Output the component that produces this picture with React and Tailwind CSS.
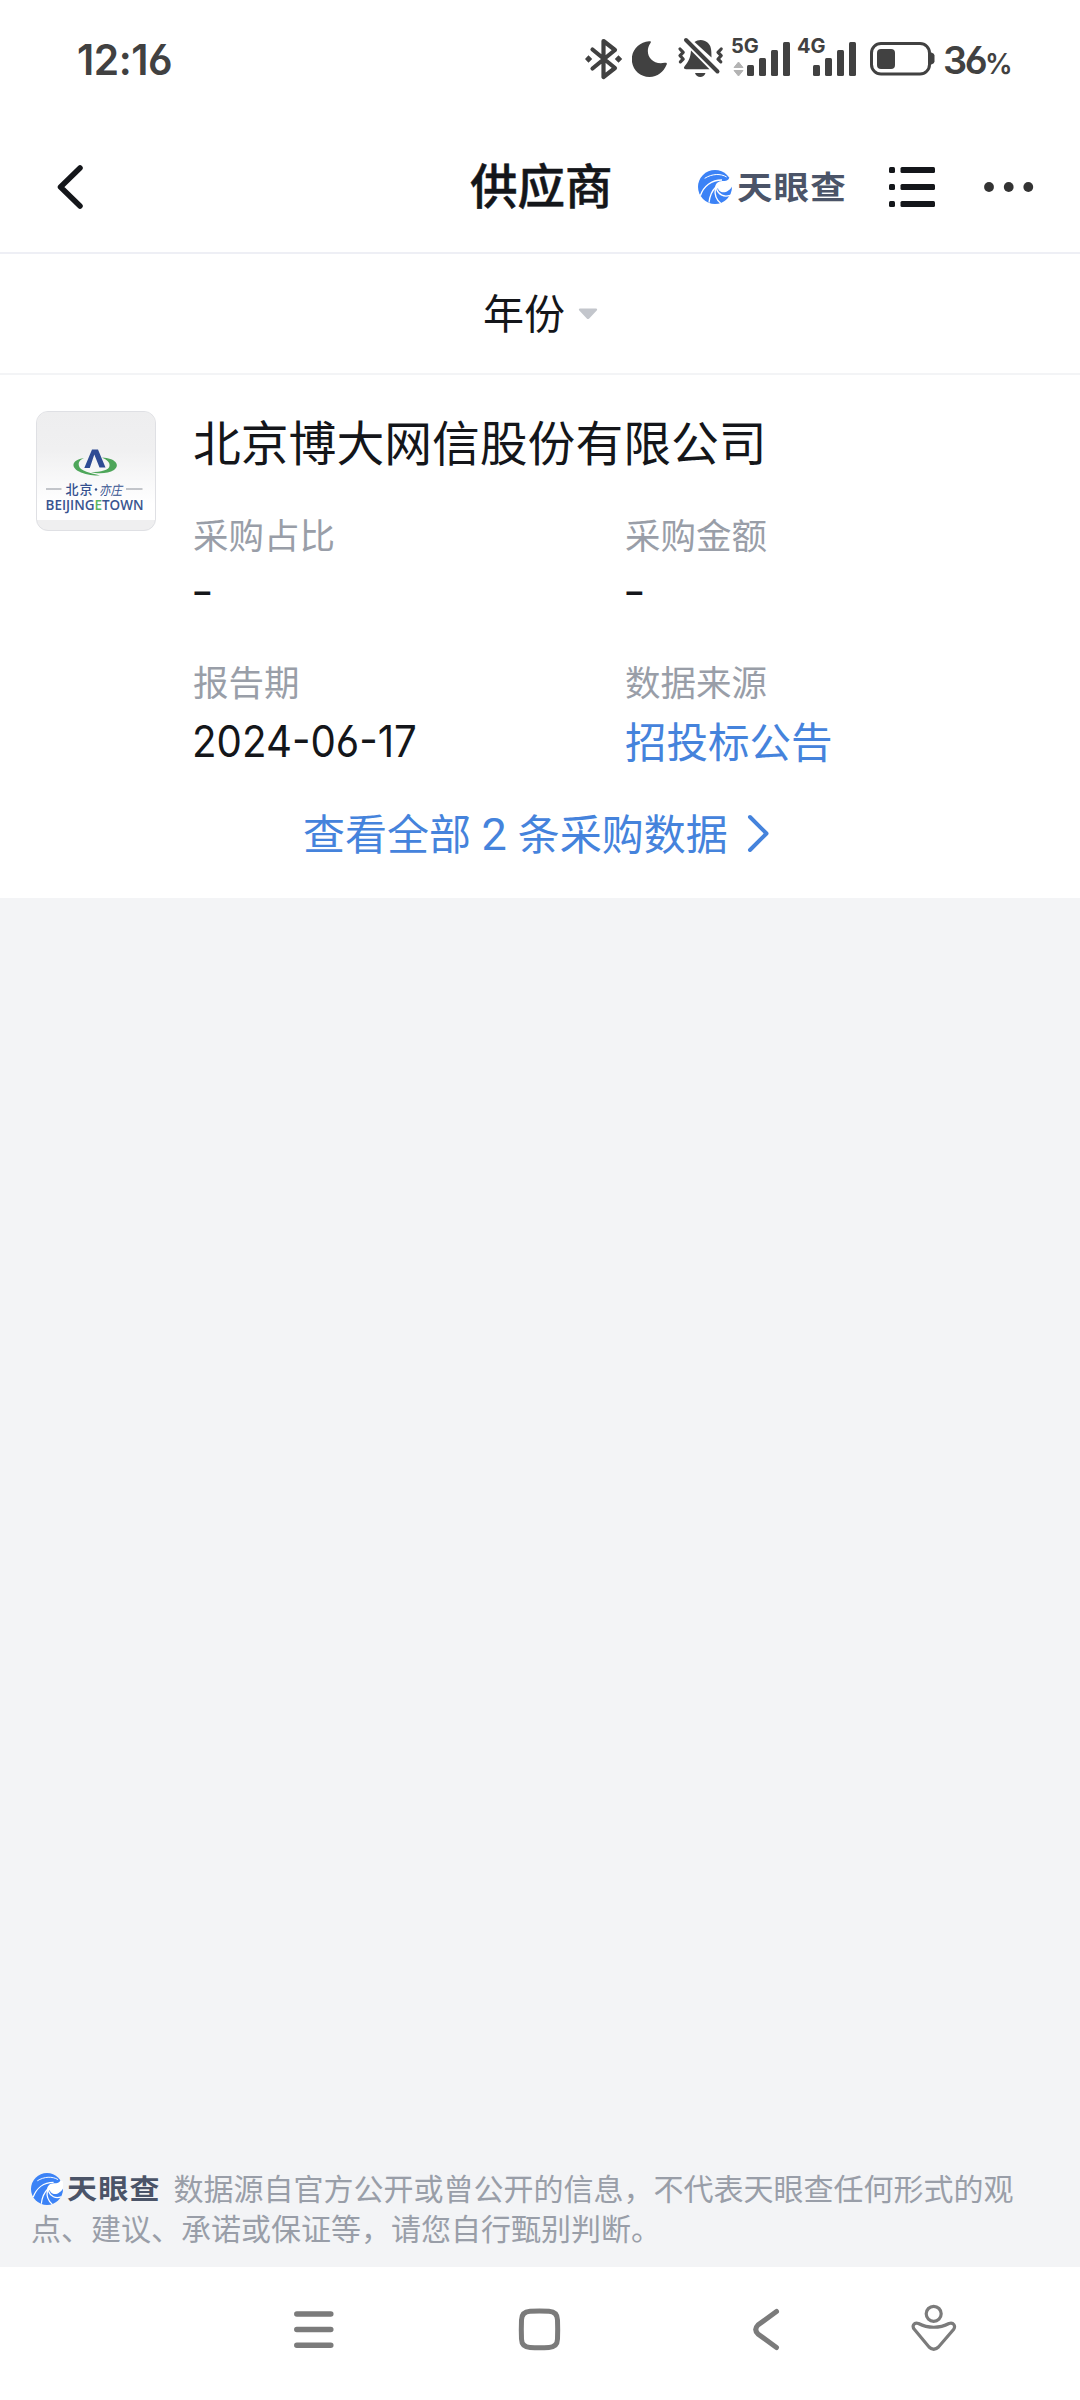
const CJK = "font-['Noto_Sans_CJK_SC',sans-serif]";

function BluetoothIcon() {
  return (
    <svg className="h-[60px] w-[38px]" viewBox="585 29 38 60" fill="none" stroke="#414141">
      <path d="M592.5 49.500 L615 68 L603.500 77 V41 L615 50 L592.500 68.500" strokeWidth="4.200" strokeLinejoin="round" strokeLinecap="round" />
      <path d="M588.500 55.300 l3.700 3.700 l-3.700 3.700 l-3.500 -3.700Z M618.500 55.300 l3.700 3.700 l-3.700 3.700 l-3.700 -3.700Z" fill="#414141" stroke="none" />
    </svg>
  );
}

function MoonIcon() {
  return (
    <svg className="ml-[9px] h-[60px] w-[36px]" viewBox="632 29 36 60">
      <path d="M649 41.200 C651 40.900 651.500 41.600 650.500 43 C643.500 53 651 65.500 664.500 62.800 C666.500 62.400 667.300 63 666.600 64.800 C663.500 72 657.500 77 649.500 77 C639.500 77 631.800 69 631.800 59.300 C631.800 49.500 639.500 42 649 41.200Z" fill="#414141" />
    </svg>
  );
}

function MutedBellIcon() {
  return (
    <svg className="ml-[9px] h-[60px] w-[47px]" viewBox="677 29 47 60" fill="none">
      <path d="M694.500 42 C698 39.200 704 39.200 707.500 42.500 C711 45.600 711.500 49 711.500 57.500Z" fill="#414141" />
      <path d="M691 50.500 L709.500 69.200 H686 C683.500 69.200 683.500 67.500 685 65.800 C689 61 690.500 57 691 50.500Z" fill="#414141" />
      <path d="M695 73 H705.500 C704 78.200 696.500 78.200 695 73Z" fill="#414141" />
      <path d="M686 40 L717.500 71.500" stroke="#414141" strokeWidth="4" strokeLinecap="round" />
      <path d="M680 49 l3.200 3.400 l-3.200 3.300 l3.200 3.300 l-2.800 2.800 M721.200 49 l-3.200 3.400 l3.200 3.300 l-3.200 3.300 l2.800 2.800" stroke="#414141" strokeWidth="3.200" strokeLinejoin="round" strokeLinecap="round" />
    </svg>
  );
}

function Signal({ label, data, className }) {
  return (
    <div className={`relative h-[60px] ${className}`}>
      <span className="absolute left-0 top-[5px] font-['Inter',sans-serif] text-[20px] leading-[24px] font-bold">{label}</span>
      <svg className="h-[60px] w-[60px]" viewBox="731 29 60 60" fill="#414141">
        {data && <path d="M738.500 62 l4.500 5.500 h-9Z M738.500 76 l4.500 -5.500 h-9Z" fill="#b3b3b3" stroke="#b3b3b3" strokeWidth="1" strokeLinejoin="round" />}
        <rect x="747" y="65" width="7" height="11" rx="1.500" />
        <rect x="759" y="58" width="7" height="18" rx="1.500" />
        <rect x="771" y="50" width="7" height="26" rx="1.500" />
        <rect x="783" y="42" width="7" height="34" rx="1.500" />
      </svg>
    </div>
  );
}

function BatteryIcon() {
  return (
    <svg className="ml-[13px] h-[60px] w-[65px]" viewBox="870 29 65 60">
      <rect x="871.500" y="43.500" width="58" height="30.500" rx="9.500" fill="none" stroke="#414141" strokeWidth="3" />
      <rect x="877" y="49" width="18" height="20" rx="4" fill="#414141" />
      <path d="M930.500 52.500 h1 q3 1 3 3 v6 q0 2 -3 3 h-1Z" fill="#414141" />
    </svg>
  );
}

function StatusBar() {
  return (
    <div className="flex h-[122px] items-start pt-[29px] pl-[77px] pr-[67px] font-['Inter',sans-serif] text-[#414141]">
      <span className="origin-left scale-x-[0.97] text-[42px] leading-[62px] font-semibold tracking-[-0.5px]" style={{ fontFeatureSettings: '"cv03"' }}>12:16</span>
      <div className="ml-auto flex">
        <BluetoothIcon />
        <MoonIcon />
        <MutedBellIcon />
        <Signal label="5G" data className="ml-[7px] w-[60px]" />
        <Signal label="4G" className="ml-[6px] w-[60px]" />
        <BatteryIcon />
        <div className="ml-[8px] flex w-[70px] items-baseline leading-[62px]">
          <span className="text-[38px] font-semibold tracking-[-2.500px]" style={{ fontFeatureSettings: '"cv03"' }}>36</span>
          <span className="origin-left scale-x-[0.95] text-[29px] font-semibold">%</span>
        </div>
      </div>
    </div>
  );
}

function SwirlMark({ className }) {
  return (
    <svg className={className} viewBox="0 0 102 102" fill="none">
      <circle cx="51" cy="51" r="51" fill="#3b82f6" />
      <path d="M53 64 C47 48 56 33 73 33 C84 33 91 31 94 23 L108 30 L106 50 L99 50 C95 62 82 70 70 66 C64 64 61 60 60 55 C57 57 54 60 53 64Z" fill="#fff" />
      <path d="M93 38 C96 33 97 29 95 22 L101 38 C102 44 102 48 101 52 C98 56 96 58 92 60 C96 53 97 46 93 38Z" fill="#fff" />
      <path d="M20 25 C42 11 68 10 86 21" stroke="#fff" strokeWidth="3" />
      <path d="M7 77 C17 49 40 30 72 30" stroke="#fff" strokeWidth="4" />
      <path d="M33 98 C35 76 42 62 54 50" stroke="#fff" strokeWidth="4" />
      <path d="M52 56 C49 74 56 90 68 100" stroke="#fff" strokeWidth="4" />
      <path d="M56 58 C62 75 78 82 96 76" stroke="#fff" strokeWidth="4" />
    </svg>
  );
}

function Header() {
  return (
    <header className="relative flex h-[132px] items-center justify-end border-b-2 border-[#eeeff5] pr-[46px]">
      <svg className="absolute left-[56px] top-[42px] h-[48px] w-[30px]" viewBox="56 164 30 48" fill="none">
        <path d="M80 168 L60.500 187 L80 206" stroke="#14161a" strokeWidth="5.500" strokeLinecap="round" strokeLinejoin="round" />
      </svg>
      <h1 className="absolute left-[470px] top-[27px] text-[47.500px] leading-[70px] font-medium text-[#14161a] [-webkit-text-stroke:0.5px_#14161a]">供应商</h1>
      <div className="flex h-[34px] items-center">
        <SwirlMark className="h-[34px] w-[34px]" />
        <span className="relative top-[-1px] ml-[5px] origin-center scale-y-[0.9] text-[35.500px] leading-[34px] font-bold tracking-[1.200px] text-[#4b5468]">天眼查</span>
      </div>
      <svg className="ml-[42px] h-[40px] w-[46px]" viewBox="0 0 46 40" fill="#14161a">
        <rect x="0" y="0" width="6" height="6" rx="1.500" />
        <rect x="11.500" y="0" width="34.500" height="6" rx="1.500" />
        <rect x="0" y="17" width="6" height="6" rx="1.500" />
        <rect x="11.500" y="17" width="34.500" height="6" rx="1.500" />
        <rect x="0" y="34" width="6" height="6" rx="1.500" />
        <rect x="11.500" y="34" width="34.500" height="6" rx="1.500" />
      </svg>
      <svg className="ml-[49px] h-[10px] w-[50px]" viewBox="0 0 50 10" fill="#333">
        <circle cx="5" cy="5" r="4.900" />
        <circle cx="24.700" cy="5" r="4.900" />
        <circle cx="44.300" cy="5" r="4.900" />
      </svg>
    </header>
  );
}

function CompanyLogo() {
  return (
    <div className="h-[120px] w-[120px] shrink-0 overflow-hidden rounded-[12px] border border-[#dfe0e4] bg-[#efeff0]">
      <svg className="h-[118px] w-[118px]" viewBox="37 412 118 118">
        <defs>
          <linearGradient id="logoShade" x1="0" y1="0" x2="0" y2="1">
            <stop offset="0" stopColor="#eeeeef" />
            <stop offset="0.350" stopColor="#f0f0f1" />
            <stop offset="0.850" stopColor="#ffffff" />
          </linearGradient>
        </defs>
        <rect x="37" y="412" width="118" height="108" fill="url(#logoShade)" />
        <path d="M84 458 C71 460 70 468 81 472.500 C87 475 94 475.500 100 475.500 C91 473 80 471 79 466 C78 462 80 460 84 458Z M102 457.500 C115 458 121 465 114 470 C108 474 97 474 91 472 C101 472 109 470 109.500 466 C110 462 107 460 102 457.500Z" fill="#4ea65a" />
        <path d="M92 449.500 h6 l7.500 18 h-6 l-5.200 -13 l-4.500 13.500 h-5.500Z" fill="#2e4b94" />
        <path d="M46 489 h15.500 M126 489 h16.500" stroke="#8b9099" strokeWidth="1" />
        <text x="65.500" y="493.500" fontSize="13" fontWeight="500" fill="#33508f" fontFamily="Noto Sans CJK SC, sans-serif" textLength="27">北京</text>
        <circle cx="96" cy="489.500" r="1.200" fill="#33508f" />
        <text x="99" y="494.500" fontSize="13" fill="#33508f" fontStyle="italic" fontFamily="Noto Sans CJK SC, sans-serif" textLength="23" lengthAdjust="spacingAndGlyphs">亦庄</text>
        <text x="45.500" y="510" fontSize="13.500" fontWeight="600" fill="#3a5590" fontFamily="Open Sans, sans-serif" textLength="98" lengthAdjust="spacingAndGlyphs">
          BEIJING<tspan fill="#5bb562">E</tspan>TOWN
        </text>
      </svg>
    </div>
  );
}

function Field({ label, children }) {
  return (
    <div className="flex flex-col items-start">
      <span className="h-[54px] text-[35.500px] leading-[54px] text-[#999ea8]">{label}</span>
      {children}
    </div>
  );
}

function Dash() {
  return (
    <span className="ml-[-2px] flex h-[60px] items-center">
      <span className="origin-left scale-x-[1.120] font-['Inter',sans-serif] text-[44px] leading-[60px]">-</span>
    </span>
  );
}

function SupplierCard() {
  return (
    <section className="h-[523px] bg-white pt-[36px] pl-[36px]">
      <div className="flex items-start">
        <CompanyLogo />
        <div className="ml-[37px] flex-1">
          <h2 className="mt-[-5px] text-[47.800px] leading-[70px] text-[#14161a]">北京博大网信股份有限公司</h2>
          <div className="mt-[31px] grid grid-cols-[432px_1fr] gap-y-[33px] text-[#14161a]">
            <Field label="采购占比"><Dash /></Field>
            <Field label="采购金额"><Dash /></Field>
            <Field label="报告期">
              <span className="mt-[3px] ml-[-1px] h-[57px] origin-left scale-x-[0.915] font-['Inter',sans-serif] text-[44px] leading-[60px]" style={{ fontFeatureSettings: '"cv03"' }}>2024-06-17</span>
            </Field>
            <Field label="数据来源">
              <a className="mt-[2px] h-[58px] text-[41.500px] leading-[60px] text-[#4583dc]">招投标公告</a>
            </Field>
          </div>
        </div>
      </div>
      <a className="mt-[34px] ml-[267px] flex h-[62px] items-center text-[#4583dc]">
        <span className="text-[42px] leading-[62px] whitespace-pre">查看全部 <span className="mr-[1.500px] ml-[1px] font-['Roboto',sans-serif] text-[45px]">2</span> 条采购数据</span>
        <svg className="ml-[18px] h-[38px] w-[24px]" viewBox="0 0 24 38" fill="none">
          <path d="M4 3 L20.500 19.500 L4 36" stroke="#4583dc" strokeWidth="4" strokeLinecap="round" strokeLinejoin="round" />
        </svg>
      </a>
    </section>
  );
}

function Disclaimer() {
  return (
    <footer className="mt-auto h-[99px] pl-[31px] pr-[60px] text-[30px] leading-[39.500px] text-[#999ea8]">
      <div className="flex items-center whitespace-nowrap">
        <SwirlMark className="relative top-px h-[32px] w-[32px]" />
        <span className="ml-[4px] origin-center scale-y-[0.92] text-[30px] leading-[39px] font-bold tracking-[1.200px] text-[#4b5468]">天眼查</span>
        <span className="ml-[13px]">数据源自官方公开或曾公开的信息，不代表天眼查任何形式的观</span>
      </div>
      <p>点、建议、承诺或保证等，请您自行甄别判断。</p>
    </footer>
  );
}

function NavigationBar() {
  return (
    <nav className="flex h-[133px] items-start bg-white pt-[37px] pl-[294px] text-[#7b7b7b]">
      <svg className="h-[50px] w-[40px]" viewBox="294 2304 40 50" stroke="currentColor" strokeWidth="5.500" strokeLinecap="round">
        <path d="M296.800 2314 H330.800 M296.800 2329.500 H330.800 M296.800 2345.200 H330.800" />
      </svg>
      <svg className="ml-[184px] h-[50px] w-[44px]" viewBox="518 2304 44 50" fill="none" stroke="currentColor" strokeWidth="5">
        <path d="M530 2311.300 Q539.500 2310.700 549 2311.300 Q557.300 2311.800 557.500 2320 Q557.900 2329.500 557.500 2339 Q557.300 2347 549 2347.400 Q539.500 2347.900 530 2347.400 Q521.700 2347 521.500 2339 Q521.100 2329.500 521.500 2320 Q521.700 2311.800 530 2311.300Z" />
      </svg>
      <svg className="ml-[190px] h-[50px] w-[28px]" viewBox="752 2304 28 50" fill="none" stroke="currentColor" strokeWidth="5" strokeLinecap="round">
        <path d="M776.500 2311.500 L758 2325 Q753.500 2329.500 758 2334 L776.500 2347.500" />
      </svg>
      <svg className="ml-[131px] h-[50px] w-[46px]" viewBox="911 2304 46 50" fill="none" stroke="currentColor" strokeWidth="3.200">
        <circle cx="933.700" cy="2313.800" r="7.500" />
        <path d="M918.500 2323.500 C928 2328.500 939.500 2328.500 949 2323.500 C953.500 2322 956 2326 953.500 2329.500 L938.500 2347 Q933.700 2351.500 929 2347 L914.500 2329.500 C911.500 2326 914 2322 918.500 2323.500Z" />
      </svg>
    </nav>
  );
}

export default function App() {
  return (
    <div className={`flex h-[2400px] w-[1080px] flex-col overflow-hidden bg-[#f3f4f6] ${CJK}`}>
      <div className="bg-white">
        <StatusBar />
        <Header />
        <div className="flex h-[121px] items-center border-b-2 border-[#f3f4f6] pl-[483px] text-[41px] leading-[60px] text-[#14161a]">
          <span className="relative top-[-3px]">年份</span>
          <svg className="ml-[13px] h-[12px] w-[20px]" viewBox="0 0 20 12">
            <path d="M2 0.500 H18 Q20 1 18.500 2.800 L11.200 10.500 Q10 11.700 8.800 10.500 L1.500 2.800 Q0 1 2 0.500Z" fill="#c3c6cc" />
          </svg>
        </div>
      </div>
      <SupplierCard />
      <Disclaimer />
      <NavigationBar />
    </div>
  );
}
